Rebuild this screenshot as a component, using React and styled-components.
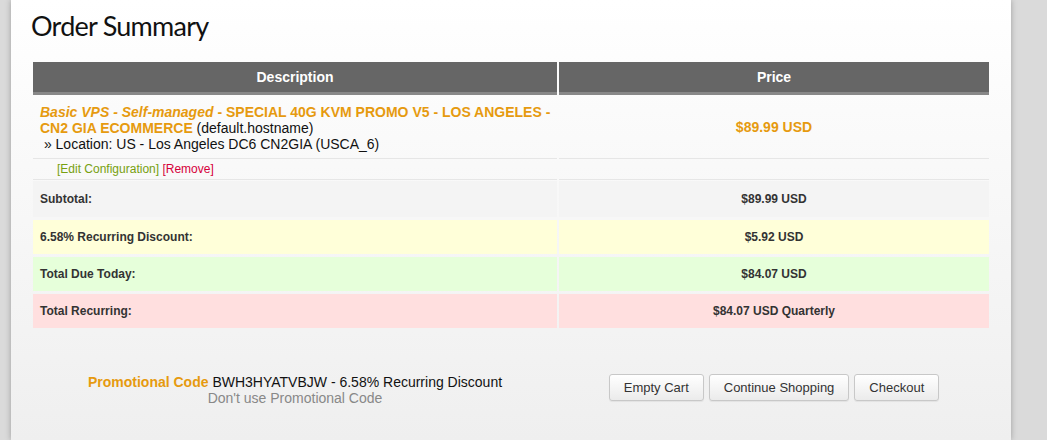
import React from "react";
import styled, { createGlobalStyle } from "styled-components";

const GlobalStyle = createGlobalStyle`
  html, body {
    margin: 0;
    padding: 0;
    background: #dadada;
    font-family: "Liberation Sans", Arial, sans-serif;
  }
`;

const Page = styled.div`
  display: flex;
  min-height: 440px;
`;

const Panel = styled.div`
  margin-left: 11px;
  width: 1000px;
  min-height: 440px;
  background: linear-gradient(#ffffff, #efefef 440px);
  box-shadow: 0 0 6px rgba(0, 0, 0, 0.28);
  padding: 0 22px;
  box-sizing: border-box;
`;

const Title = styled.h1`
  margin: 0 0 0 -2px;
  padding-top: 8px;
  height: 62px;
  box-sizing: border-box;
  font-family: "Lato", "Open Sans", sans-serif;
  font-weight: 400;
  font-size: 27px;
  letter-spacing: -0.75px;
  line-height: 36px;
  color: #111;
`;

const Row = styled.div`
  display: grid;
  grid-template-columns: 524px 1fr;
  column-gap: 2px;
  margin-bottom: ${(p) => p.$gap || 0}px;
`;

const HeadCell = styled.div`
  background: #666;
  border-bottom: 3px solid #888;
  height: 30px;
  display: flex;
  align-items: center;
  justify-content: center;
  color: #fff;
  font-weight: bold;
  font-size: 14px;
`;

const ItemCell = styled.div`
  border-bottom: 1px solid #e6e6e6;
  padding: ${(p) => p.$pad || "0"};
  min-height: ${(p) => p.$h}px;
  box-sizing: border-box;
  font-size: 14px;
  line-height: 16px;
  color: #111;
  display: flex;
  flex-direction: column;
  justify-content: ${(p) => (p.$center ? "center" : "flex-start")};
  align-items: ${(p) => (p.$center ? "center" : "flex-start")};
`;

const Orange = styled.span`
  color: #e69a0f;
  font-weight: bold;
  font-style: ${(p) => (p.$italic ? "italic" : "normal")};
`;

const Links = styled.div`
  font-size: 12px;
  line-height: 20px;
  padding-left: 24px;
`;

const LinkText = styled.a`
  color: ${(p) => p.$color};
  text-decoration: none;
`;

const TotalCell = styled.div`
  background: ${(p) => p.$bg};
  height: ${(p) => p.$h}px;
  display: flex;
  align-items: center;
  justify-content: ${(p) => (p.$center ? "center" : "flex-start")};
  padding-left: ${(p) => (p.$center ? 0 : 7)}px;
  font-size: 12px;
  font-weight: bold;
  color: #333;
`;

const Footer = styled.div`
  display: grid;
  grid-template-columns: 524px 1fr;
  column-gap: 2px;
  margin-top: 46px;
  align-items: start;
`;

const Promo = styled.div`
  text-align: center;
  font-size: 14px;
  line-height: 16px;
  color: #111;
`;

const Muted = styled.div`
  color: #888;
`;

const Buttons = styled.div`
  display: flex;
  justify-content: center;
  gap: 5px;
`;

const Button = styled.button`
  height: 27px;
  padding: 0 14px;
  font-family: "Liberation Sans", Arial, sans-serif;
  font-size: 13px;
  color: #333;
  background: linear-gradient(#ffffff, #ebebeb);
  border: 1px solid #c8c8c8;
  border-radius: 3px;
  box-shadow: 0 1px 1px rgba(0, 0, 0, 0.06);
`;

const totals = [
  { label: "Subtotal:", value: "$89.99 USD", bg: "#f4f4f4", h: 36 },
  { label: "6.58% Recurring Discount:", value: "$5.92 USD", bg: "#ffffd9", h: 34 },
  { label: "Total Due Today:", value: "$84.07 USD", bg: "#e6ffda", h: 34 },
  { label: "Total Recurring:", value: "$84.07 USD Quarterly", bg: "#ffdfdf", h: 34 },
];

export default function App() {
  return (
    <Page>
      <GlobalStyle />
      <Panel>
        <Title>Order Summary</Title>
        <Row>
          <HeadCell>Description</HeadCell>
          <HeadCell>Price</HeadCell>
        </Row>
        <Row>
          <ItemCell $h={64} $pad="9px 6px 0 7px">
            <div>
              <Orange $italic>Basic VPS - Self-managed</Orange>
              <Orange> - SPECIAL 40G KVM PROMO V5 - LOS ANGELES -</Orange>
              <br />
              <Orange>CN2 GIA ECOMMERCE</Orange> (default.hostname)
              <br />
              &nbsp;» Location: US - Los Angeles DC6 CN2GIA (USCA_6)
            </div>
          </ItemCell>
          <ItemCell $h={64} $center>
            <Orange>$89.99 USD</Orange>
          </ItemCell>
        </Row>
        <Row $gap={1}>
          <ItemCell $h={21}>
            <Links>
              <LinkText $color="#77a010">[Edit Configuration]</LinkText>{" "}
              <LinkText $color="#d6003b">[Remove]</LinkText>
            </Links>
          </ItemCell>
          <ItemCell $h={21} />
        </Row>
        {totals.map((t, i) => (
          <Row key={t.label} $gap={i < totals.length - 1 ? 3 : 0}>
            <TotalCell $bg={t.bg} $h={t.h}>
              {t.label}
            </TotalCell>
            <TotalCell $bg={t.bg} $h={t.h} $center>
              {t.value}
            </TotalCell>
          </Row>
        ))}
        <Footer>
          <Promo>
            <div>
              <Orange>Promotional Code</Orange> BWH3HYATVBJW - 6.58% Recurring Discount
            </div>
            <Muted>Don't use Promotional Code</Muted>
          </Promo>
          <Buttons>
            <Button>Empty Cart</Button>
            <Button>Continue Shopping</Button>
            <Button>Checkout</Button>
          </Buttons>
        </Footer>
      </Panel>
    </Page>
  );
}
